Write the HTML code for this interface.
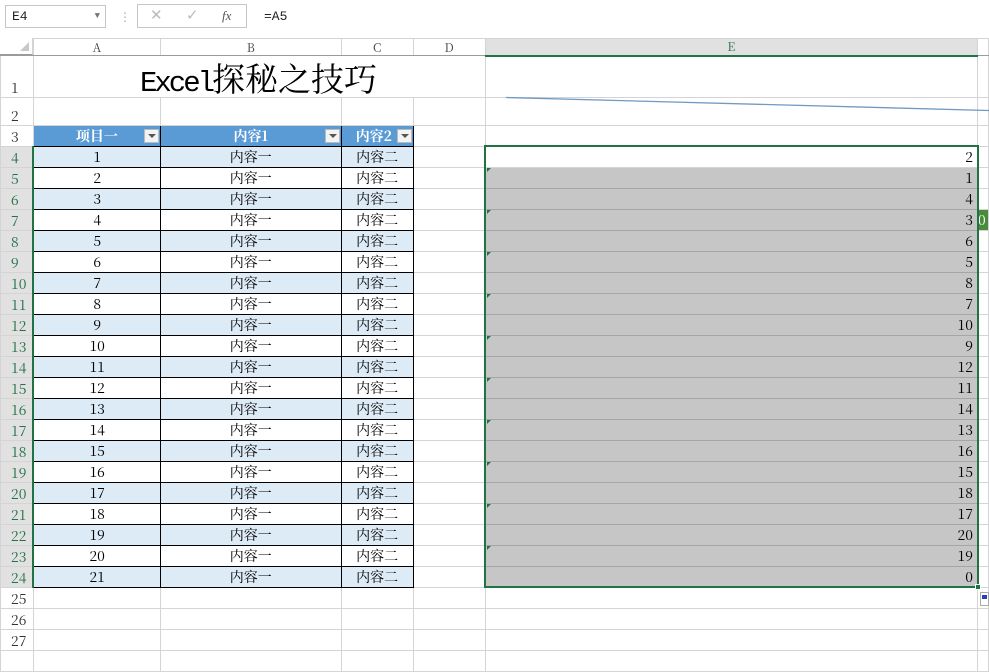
<!DOCTYPE html>
<html><head><meta charset="utf-8"><style>
*{margin:0;padding:0;box-sizing:border-box}
body{width:989px;height:659px;overflow:hidden;background:#fff;position:relative;font-family:"Noto Serif CJK SC",serif;font-size:14px;color:#000}
.a{position:absolute}
table{position:absolute;left:0;top:38px;border-collapse:collapse;table-layout:fixed}
tr{height:21px}
td{border:1px solid #d4d4d4;padding:0;white-space:nowrap;overflow:hidden;text-align:center;height:21px;line-height:19px}
td.h{background:#fff;text-align:left;padding-left:10px;vertical-align:bottom;line-height:18px;color:#333}
td.hs{background:#e1e1e1;color:#217346;border-right:2px solid #217346}
tr.ch{height:17px}
tr.ch td{height:17px;line-height:15px;background:#fff;font-size:12px;color:#444;border-bottom:1px solid #9b9b9b}
td.t{border-color:#000}
td.b{background:#ddebf7}
td.e{background:#c6c6c6;border-color:#a6a6a6;text-align:right;padding-right:4px}
td.e0{text-align:right;padding-right:4px}
td.th{background:#5b9bd5;color:#fff;font-weight:bold;border-color:#000;position:relative}
.dd{position:absolute;right:1px;top:3px;width:15px;height:14px;background:#f3f3f3;border:1px solid #bbb}
.dd:after{content:"";position:absolute;left:3px;top:4px;border-left:4px solid transparent;border-right:4px solid transparent;border-top:4px solid #555}
.tri{position:absolute;width:0;height:0;border-top:4px solid #217346;border-right:4px solid transparent}
</style></head><body>
<div class="a" style="left:5px;top:5px;width:101px;height:23px;border:1px solid #c6c6c6;font-size:13px;line-height:21px;padding-left:6px;color:#222;font-family:'Liberation Mono',monospace">E4<span style="position:absolute;right:5px;top:0;font-size:9px;color:#777">▼</span></div>
<div class="a" style="left:119px;top:8px;color:#aaa;font-size:12px">⋮</div>
<div class="a" style="left:137px;top:4px;width:110px;height:24px;border:1px solid #c6c6c6;color:#bbb;font-size:15px;line-height:22px;font-family:'Liberation Sans',sans-serif"><span style="position:absolute;left:12px">✕</span><span style="position:absolute;left:48px">✓</span><span style="position:absolute;left:84px;font-style:italic;color:#555;font-size:13px;font-family:'Liberation Serif',serif">fx</span></div>
<div class="a" style="left:264px;top:9px;font-size:13px;color:#222;font-family:'Liberation Mono',monospace">=A5</div>
<table>
<colgroup><col style="width:33px"><col style="width:127px"><col style="width:181px"><col style="width:72px"><col style="width:72px"><col style="width:493px"><col style="width:11px"></colgroup>
<tr class="ch"><td style="background:#fff"></td><td>A</td><td>B</td><td>C</td><td>D</td><td style="background:#e1e1e1;color:#217346;border-bottom:2px solid #217346">E</td><td></td></tr>
<tr style="height:42px"><td class="h" style="height:42px">1</td><td colspan="4" style="height:42px;line-height:42px;border-color:#fff #d4d4d4 #d4d4d4 #d4d4d4;position:relative"><span style="position:absolute;left:106px;top:2px;font-size:33px;line-height:40px;white-space:nowrap"><span style="font-family:'Liberation Mono',monospace;font-size:29px;letter-spacing:-3px">Excel</span>探秘之技巧</span></td><td></td><td></td></tr>
<tr style="height:28px"><td class="h" style="height:28px">2</td><td></td><td></td><td></td><td></td><td></td><td></td></tr>
<tr><td class="h">3</td><td class="th">项目一<span class="dd"></span></td><td class="th">内容1<span class="dd"></span></td><td class="th" style="text-align:left;padding-left:14px">内容2<span class="dd"></span></td><td></td><td></td><td></td></tr>
<tr><td class="h hs">4</td><td class="t b">1</td><td class="t b">内容一</td><td class="t b">内容二</td><td></td><td class="e0">2</td><td></td></tr>
<tr><td class="h hs">5</td><td class="t">2</td><td class="t">内容一</td><td class="t">内容二</td><td></td><td class="e">1</td><td></td></tr>
<tr><td class="h hs">6</td><td class="t b">3</td><td class="t b">内容一</td><td class="t b">内容二</td><td></td><td class="e">4</td><td></td></tr>
<tr><td class="h hs">7</td><td class="t">4</td><td class="t">内容一</td><td class="t">内容二</td><td></td><td class="e">3</td><td style="background:#4a8a3c;color:#fff;text-align:left">0</td></tr>
<tr><td class="h hs">8</td><td class="t b">5</td><td class="t b">内容一</td><td class="t b">内容二</td><td></td><td class="e">6</td><td></td></tr>
<tr><td class="h hs">9</td><td class="t">6</td><td class="t">内容一</td><td class="t">内容二</td><td></td><td class="e">5</td><td></td></tr>
<tr><td class="h hs">10</td><td class="t b">7</td><td class="t b">内容一</td><td class="t b">内容二</td><td></td><td class="e">8</td><td></td></tr>
<tr><td class="h hs">11</td><td class="t">8</td><td class="t">内容一</td><td class="t">内容二</td><td></td><td class="e">7</td><td></td></tr>
<tr><td class="h hs">12</td><td class="t b">9</td><td class="t b">内容一</td><td class="t b">内容二</td><td></td><td class="e">10</td><td></td></tr>
<tr><td class="h hs">13</td><td class="t">10</td><td class="t">内容一</td><td class="t">内容二</td><td></td><td class="e">9</td><td></td></tr>
<tr><td class="h hs">14</td><td class="t b">11</td><td class="t b">内容一</td><td class="t b">内容二</td><td></td><td class="e">12</td><td></td></tr>
<tr><td class="h hs">15</td><td class="t">12</td><td class="t">内容一</td><td class="t">内容二</td><td></td><td class="e">11</td><td></td></tr>
<tr><td class="h hs">16</td><td class="t b">13</td><td class="t b">内容一</td><td class="t b">内容二</td><td></td><td class="e">14</td><td></td></tr>
<tr><td class="h hs">17</td><td class="t">14</td><td class="t">内容一</td><td class="t">内容二</td><td></td><td class="e">13</td><td></td></tr>
<tr><td class="h hs">18</td><td class="t b">15</td><td class="t b">内容一</td><td class="t b">内容二</td><td></td><td class="e">16</td><td></td></tr>
<tr><td class="h hs">19</td><td class="t">16</td><td class="t">内容一</td><td class="t">内容二</td><td></td><td class="e">15</td><td></td></tr>
<tr><td class="h hs">20</td><td class="t b">17</td><td class="t b">内容一</td><td class="t b">内容二</td><td></td><td class="e">18</td><td></td></tr>
<tr><td class="h hs">21</td><td class="t">18</td><td class="t">内容一</td><td class="t">内容二</td><td></td><td class="e">17</td><td></td></tr>
<tr><td class="h hs">22</td><td class="t b">19</td><td class="t b">内容一</td><td class="t b">内容二</td><td></td><td class="e">20</td><td></td></tr>
<tr><td class="h hs">23</td><td class="t">20</td><td class="t">内容一</td><td class="t">内容二</td><td></td><td class="e">19</td><td></td></tr>
<tr><td class="h hs">24</td><td class="t b">21</td><td class="t b">内容一</td><td class="t b">内容二</td><td></td><td class="e">0</td><td></td></tr>
<tr><td class="h">25</td><td></td><td></td><td></td><td></td><td></td><td></td></tr>
<tr><td class="h">26</td><td></td><td></td><td></td><td></td><td></td><td></td></tr>
<tr><td class="h">27</td><td></td><td></td><td></td><td></td><td></td><td></td></tr>
<tr><td class="h"></td><td></td><td></td><td></td><td></td><td></td><td></td></tr>
</table>
<div class="a" style="left:0;top:38px;width:33px;height:17px;background:#fff;border-right:1px solid #d4d4d4;border-bottom:1px solid #9b9b9b"><div style="position:absolute;right:3px;bottom:3px;border-left:9px solid transparent;border-bottom:9px solid #c8c8c8"></div></div>
<div class="a" style="left:484px;top:145px;width:495px;height:443px;border:2px solid #217346"></div>
<div class="a" style="left:975px;top:584px;width:6px;height:6px;background:#217346;border:1px solid #fff"></div>
<div class="a" style="left:980px;top:592px;width:9px;height:14px;border:1px solid #aaa;background:#fff"><div style="margin:2px 1px;height:4px;background:#2a3fc0"></div></div>
<svg class="a" style="left:0;top:0" width="989" height="659"><line x1="506" y1="97.5" x2="989" y2="110.5" stroke="#6f9ac4" stroke-width="1.3"/></svg>
<div class="tri" style="left:487px;top:168px"></div><div class="tri" style="left:487px;top:210px"></div><div class="tri" style="left:487px;top:252px"></div><div class="tri" style="left:487px;top:294px"></div><div class="tri" style="left:487px;top:336px"></div><div class="tri" style="left:487px;top:378px"></div><div class="tri" style="left:487px;top:420px"></div><div class="tri" style="left:487px;top:462px"></div><div class="tri" style="left:487px;top:504px"></div><div class="tri" style="left:487px;top:546px"></div>
</body></html>
